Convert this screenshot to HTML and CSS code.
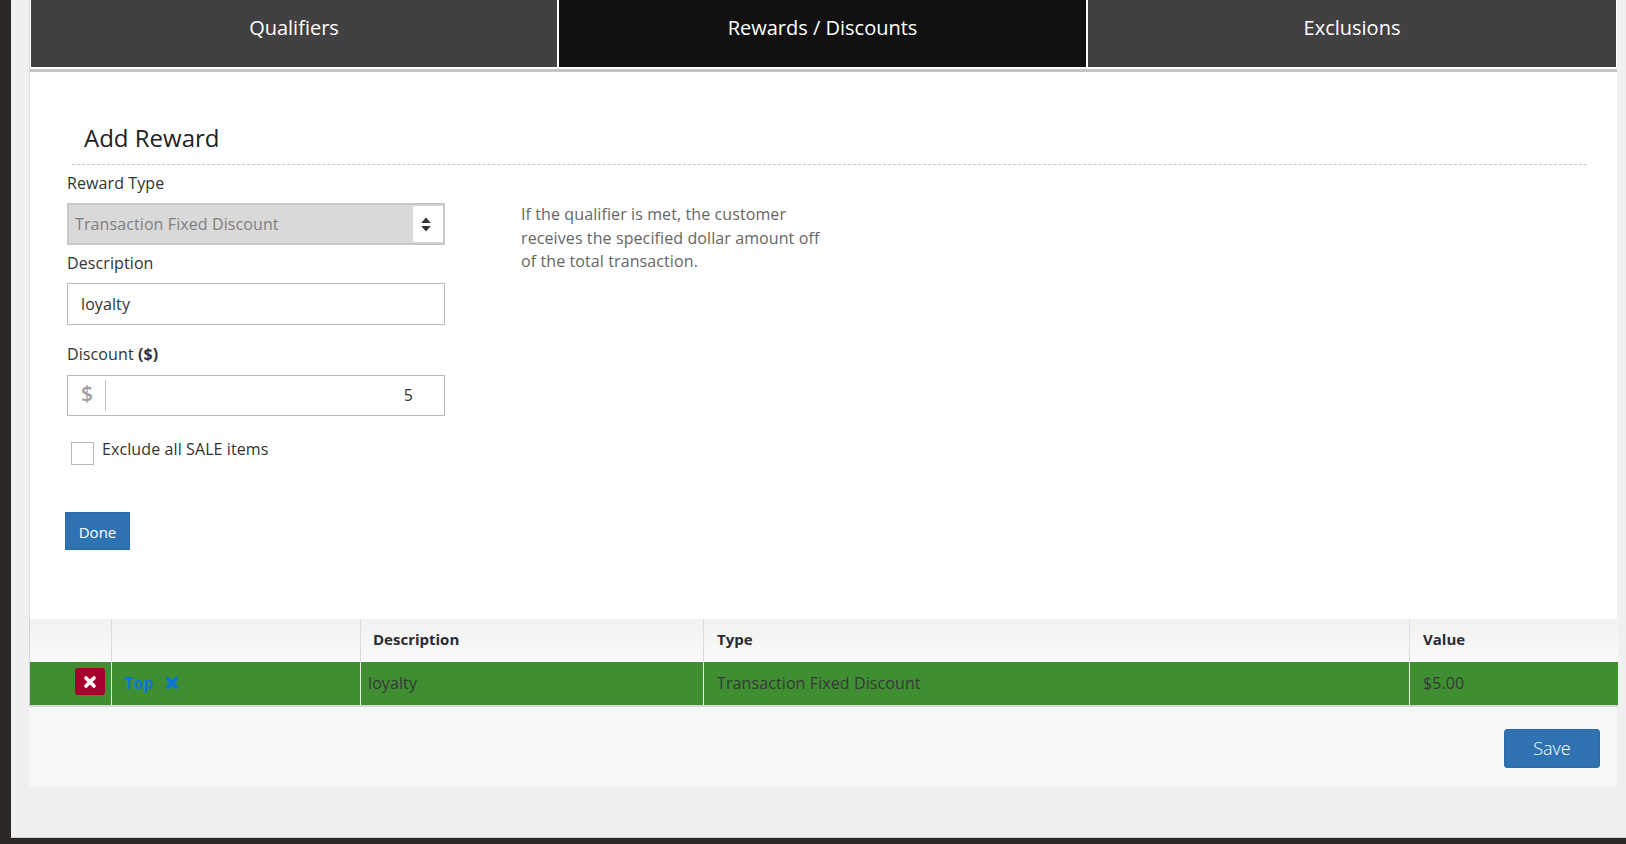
FILE: index.html
```html
<!DOCTYPE html>
<html lang="en">
<head>
<meta charset="utf-8">
<title>Add Reward</title>
<link rel="stylesheet" href="styles.css">
</head>
<body>
<div class="page">
  <main class="panel">
    <nav class="tabs">
      <a class="tab">Qualifiers</a>
      <a class="tab active">Rewards / Discounts</a>
      <a class="tab">Exclusions</a>
    </nav>
    <section class="editor">
      <h2 class="title">Add Reward</h2>
      <div class="columns">
        <div class="form">
          <div class="label first">Reward Type</div>
          <div class="field select">
            <span class="select-text">Transaction Fixed Discount</span>
            <span class="select-arrows">
              <svg width="10" height="15" viewBox="0 0 10 15"><path d="M5 0.5 9.8 6H0.2ZM0.2 9H9.8L5 14.5Z" fill="#333"/></svg>
            </span>
          </div>
          <div class="label">Description</div>
          <div class="field text">loyalty</div>
          <div class="label discount">Discount <b>($)</b></div>
          <div class="field money">
            <span class="addon">$</span>
            <span class="amount">5</span>
          </div>
          <div class="check-row">
            <span class="checkbox"></span>
            <span class="check-label">Exclude all SALE items</span>
          </div>
          <button class="btn done" type="button">Done</button>
        </div>
        <p class="help">If the qualifier is met, the customer receives the specified dollar amount off of the total transaction.</p>
      </div>
    </section>
    <table class="grid">
      <colgroup>
        <col class="c1"><col class="c2"><col class="c3"><col class="c4"><col class="c5">
      </colgroup>
      <thead>
        <tr><th></th><th></th><th class="desc-head">Description</th><th>Type</th><th>Value</th></tr>
      </thead>
      <tbody>
        <tr>
          <td class="del-cell">
            <span class="del">
              <svg width="14" height="14" viewBox="0 0 14 14"><path d="M3 3 11 11M11 3 3 11" stroke="#fff" stroke-width="3.6" stroke-linecap="round"/></svg>
            </span>
          </td>
          <td class="top-cell">
            <span class="top">Top</span>
            <svg class="top-x" width="14" height="14" viewBox="0 0 14 14"><path d="M2.8 2.8 11.2 11.2M11.2 2.8 2.8 11.2" stroke="#0b76d8" stroke-width="3.8" stroke-linecap="round"/></svg>
          </td>
          <td class="desc-cell">loyalty</td>
          <td>Transaction Fixed Discount</td>
          <td>$5.00</td>
        </tr>
      </tbody>
    </table>
    <footer class="actions">
      <button class="btn save" type="button">Save</button>
    </footer>
  </main>
</div>
</body>
</html>
```
FILE: styles.css
```css
* { box-sizing: border-box; }
html, body { margin: 0; height: 100%; overflow: hidden; }
body {
  background: #2c2825;
  font-family: "Open Sans", "Noto Sans", sans-serif;
  font-size: 16px;
  letter-spacing: 0.1px;
  color: #333;
}
.page {
  margin-left: 11px;
  height: 838px;
  background: #f0f0f0;
  border-bottom: 1px solid #d4d4d4;
  padding: 0 9px 0 18px;
}
.panel { display: flex; flex-direction: column; }
.tabs {
  display: flex;
  height: 72px;
  padding: 0 1px 2px 1px;
  background: #fff;
  border-bottom: 3px solid #c4c4c4;
  border-left: 1px solid #ddd;
}
.tab {
  flex: 1;
  height: 67px;
  line-height: 56px;
  text-align: center;
  color: #fff;
  font-size: 20px;
  letter-spacing: 0;
  background: #414141;
  border-left: 2px solid #fff;
}
.tab:first-child { flex: 0 0 526px; border-left: 0; }
.tab.active { flex: 0 0 529px; background: #111; }
.editor {
  height: 547px;
  background: #fff;
  border-left: 1px solid #ddd;
  padding: 0 30px 0 0;
}
.title {
  margin: 0 0 0 42px;
  padding: 47px 0 0 12px;
  height: 93px;
  border-bottom: 1px dashed #c8c8c8;
  font-size: 24px;
  letter-spacing: 0;
  line-height: 38px;
  font-weight: 400;
  color: #222;
}
.columns { display: flex; }
.form { width: 378px; margin-left: 37px; flex: none; }
.label { line-height: 22px; margin-top: 7px; margin-bottom: 9px; }
.label.first { margin-top: 7px; margin-bottom: 9px; }
.label.discount { margin-top: 18px; margin-bottom: 10px; }
.field {
  display: flex;
  align-items: center;
  width: 378px;
  height: 42px;
  border: 1px solid #b8b8b8;
  background: #fff;
}
.select { background: #d9d9d9; border: 2px solid #c8c8c8; padding-left: 6px; }
.select-text { flex: 1; color: #7f7f7f; }
.select-arrows {
  display: flex;
  align-items: center;
  justify-content: center;
  width: 30px;
  height: 36px;
  padding-right: 4px;
  background: #fff;
}
.text { padding-left: 13px; color: #333; }
.money { height: 41px; }
.addon {
  width: 38px;
  height: 31px;
  margin-top: -1px;
  border-right: 1px solid #c4c4c4;
  color: #a0a0a0;
  font-size: 21px;
  font-weight: 600;
  line-height: 27px;
  padding-left: 13px;
}
.amount { flex: 1; text-align: right; padding-right: 31px; margin-top: -2px; }
.check-row { display: flex; margin-top: 20px; margin-left: 4px; }
.checkbox {
  width: 23px;
  height: 23px;
  margin-top: 6px;
  border: 1px solid #b8b8b8;
  background: #fff;
  flex: none;
}
.check-label { margin-left: 8px; line-height: 24px; padding-top: 1px; }
.btn {
  display: block;
  border: 1px solid #2b6ca8;
  background: #2e72b2;
  color: #fff;
  font-family: inherit;
  padding: 0;
}
.done {
  width: 65px;
  height: 38px;
  margin-top: 47px;
  margin-left: -2px;
  font-size: 15px;
  font-weight: 500;
  padding-top: 2px;
}
.help {
  width: 310px;
  margin: 38px 0 0 76px;
  color: #666;
  line-height: 23.5px;
}
.grid {
  width: 1588px;
  table-layout: fixed;
  border-collapse: collapse;
  border-bottom: 2px solid #d6d6d6;
}
.c1 { width: 82px; }
.c2 { width: 249px; }
.c3 { width: 343px; }
.c4 { width: 706px; }
.c5 { width: 208px; }
.grid th, .grid td { padding: 0 0 0 13px; text-align: left; }
.grid th {
  height: 43px;
  padding-bottom: 4px;
  font-size: 15px;
  letter-spacing: 0;
  font-weight: 700;
  color: #2a2a33;
  background: linear-gradient(#f1f1f1, #fafafa);
  border-left: 1px solid #dcdcdc;
}
.grid th.desc-head { padding-left: 12px; }
.grid td {
  height: 44px;
  padding-bottom: 2px;
  background: #3f8e32;
  color: #383838;
  border-left: 1px solid #e6efe4;
}
.grid th:first-child, .grid td:first-child { border-left: 1px solid #d0d0d0; }
.grid td.del-cell { padding: 0 6px 0 0; text-align: right; }
.del {
  display: inline-flex;
  align-items: center;
  justify-content: center;
  width: 30px;
  height: 27px;
  border-radius: 3px;
  background: #a6002e;
  vertical-align: middle;
  margin-top: -6px;
}
.grid td.top-cell { padding-left: 12px; }
.grid td.desc-cell { padding-left: 7px; }
.top { color: #0b76d8; font-weight: 700; }
.top-x { margin-left: 7px; vertical-align: -1px; }
.actions {
  display: flex;
  justify-content: flex-end;
  align-items: flex-start;
  height: 80px;
  padding: 22px 17px 0 0;
  background: #f7f7f7;
}
.save {
  width: 96px;
  height: 39px;
  padding-bottom: 2px;
  border-radius: 3px;
  font-size: 18px;
  letter-spacing: 0;
  font-weight: 300;
}
```
